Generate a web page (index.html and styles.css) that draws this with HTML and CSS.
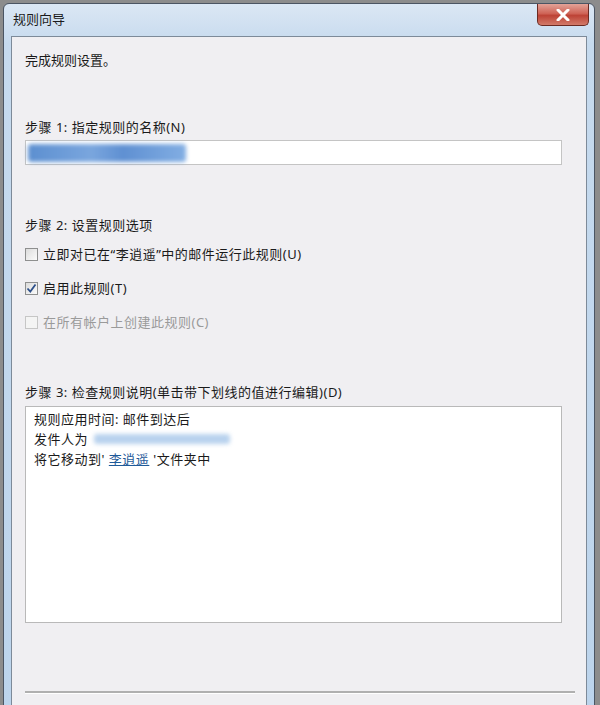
FILE: index.html
```html
<!DOCTYPE html>
<html lang="zh-CN">
<head>
  <meta charset="UTF-8">
  <title>规则向导</title>
  <link rel="stylesheet" href="styles.css">
</head>
<body>
  <div class="window">
    <div class="titlebar">
      <span class="title">规则向导</span>
      <button class="close-btn" aria-label="关闭">
        <svg width="14" height="12" viewBox="0 0 14 12">
          <path d="M2 1 L12 11 M12 1 L2 11" stroke="#fff" stroke-width="3" stroke-linecap="round"/>
        </svg>
      </button>
    </div>
    <div class="content">
      <p class="intro">完成规则设置。</p>

      <div class="step step-name">
        <div class="step-label">步骤 1: 指定规则的名称(N)</div>
        <div class="name-input">
          <span class="blurred blurred-name"></span>
        </div>
      </div>

      <div class="step step-options">
        <div class="step-label">步骤 2: 设置规则选项</div>
        <label class="option">
          <span class="checkbox"></span>
          立即对已在“李逍遥”中的邮件运行此规则(U)
        </label>
        <label class="option">
          <span class="checkbox checked">
            <svg width="11" height="11" viewBox="0 0 11 11">
              <path d="M1.5 5.5 L4.3 8.5 L9.5 1.5" fill="none" stroke="#2d4f8a" stroke-width="1.8"/>
            </svg>
          </span>
          启用此规则(T)
        </label>
        <label class="option disabled">
          <span class="checkbox"></span>
          在所有帐户上创建此规则(C)
        </label>
      </div>

      <div class="step step-desc">
        <div class="step-label">步骤 3: 检查规则说明(单击带下划线的值进行编辑)(D)</div>
        <div class="desc-box">
          <div class="desc-line">规则应用时间: 邮件到达后</div>
          <div class="desc-line">发件人为 <span class="blurred blurred-sender"></span></div>
          <div class="desc-line">将它移动到' <a href="#" class="value-link">李逍遥</a> '文件夹中</div>
        </div>
      </div>

      <div class="separator"></div>
    </div>
  </div>
</body>
</html>
```

FILE: styles.css
```css
body {
  margin: 0;
  background-color: #8c8c8c;
  font-family: "Noto Sans", "Noto Sans CJK SC", sans-serif;
  font-size: 13px;
  color: #1a1a1a;
  overflow: hidden;
}
.window {
  margin: 3px 0 0 3px;
  width: 592px;
  height: 720px;
  display: flex;
  flex-direction: column;
  background: linear-gradient(to bottom, #dbe7f4 0%, #c6daee 40px, #bcd4ec 100%);
  border: 1px solid #4b5563;
  border-radius: 6px 6px 0 0;
  box-sizing: border-box;
}
.titlebar {
  height: 32px;
  display: flex;
  align-items: flex-start;
  justify-content: space-between;
}
.title {
  margin: 5px 0 0 9px;
  font-size: 13px;
  color: #1b1b1b;
}
.close-btn {
  width: 52px;
  height: 22px;
  margin-right: 5px;
  padding: 0;
  border: 1px solid #6b2a22;
  border-top: none;
  border-radius: 0 0 5px 5px;
  background: linear-gradient(to bottom, #e3a398 0%, #cf6457 45%, #bd4336 55%, #d27a69 100%);
  display: flex;
  align-items: center;
  justify-content: center;
}
.content {
  flex: 1;
  margin: 0 7px;
  padding: 0 13px;
  background-color: #f0eff2;
  border: 1px solid #7d8a99;
  border-bottom: none;
}
.intro {
  margin: 14px 0 0;
  line-height: 18px;
}
.step-label {
  line-height: 18px;
  letter-spacing: 0.5px;
}
.step-name {
  margin-top: 49px;
}
.name-input {
  margin-top: 4px;
  width: 537px;
  height: 25px;
  box-sizing: border-box;
  background-color: #fff;
  border: 1px solid #c4c4c4;
  display: flex;
  align-items: center;
  padding-left: 2px;
}
.blurred {
  display: inline-block;
  filter: blur(2px);
  border-radius: 3px;
}
.blurred-name {
  width: 158px;
  height: 18px;
  background: linear-gradient(to right, #5c8fd0, #7aa6de 40%, #5f90d2 60%, #82aee3);
}
.step-options {
  margin-top: 51px;
}
.option {
  display: flex;
  align-items: center;
  gap: 5px;
  line-height: 18px;
  letter-spacing: 0.5px;
  margin-top: 11px;
}
.option + .option {
  margin-top: 16px;
}
.option.disabled {
  color: #9a9a9a;
}
.checkbox {
  width: 13px;
  height: 13px;
  box-sizing: border-box;
  border: 1px solid #8e8f8f;
  background: linear-gradient(135deg, #dcdcdc, #fbfbfb);
  display: flex;
  align-items: center;
  justify-content: center;
}
.option.disabled .checkbox {
  border-color: #c6c6c6;
  background: #f4f4f4;
}
.step-desc {
  margin-top: 52px;
}
.desc-box {
  margin-top: 5px;
  width: 537px;
  height: 217px;
  box-sizing: border-box;
  background-color: #fff;
  border: 1px solid #b9b9b9;
  padding: 2px 8px;
}
.desc-line {
  line-height: 20px;
  letter-spacing: 0.5px;
  display: flex;
  align-items: center;
  white-space: pre;
}
.blurred-sender {
  width: 136px;
  height: 10px;
  margin-left: 2px;
  background-color: #b8d2ee;
}
.value-link {
  color: #1f5a99;
  text-decoration: underline;
}
.separator {
  margin-top: 68px;
  width: 550px;
  height: 2px;
  background-color: #b0b0b0;
  border-bottom: 1px solid #fff;
}
```
